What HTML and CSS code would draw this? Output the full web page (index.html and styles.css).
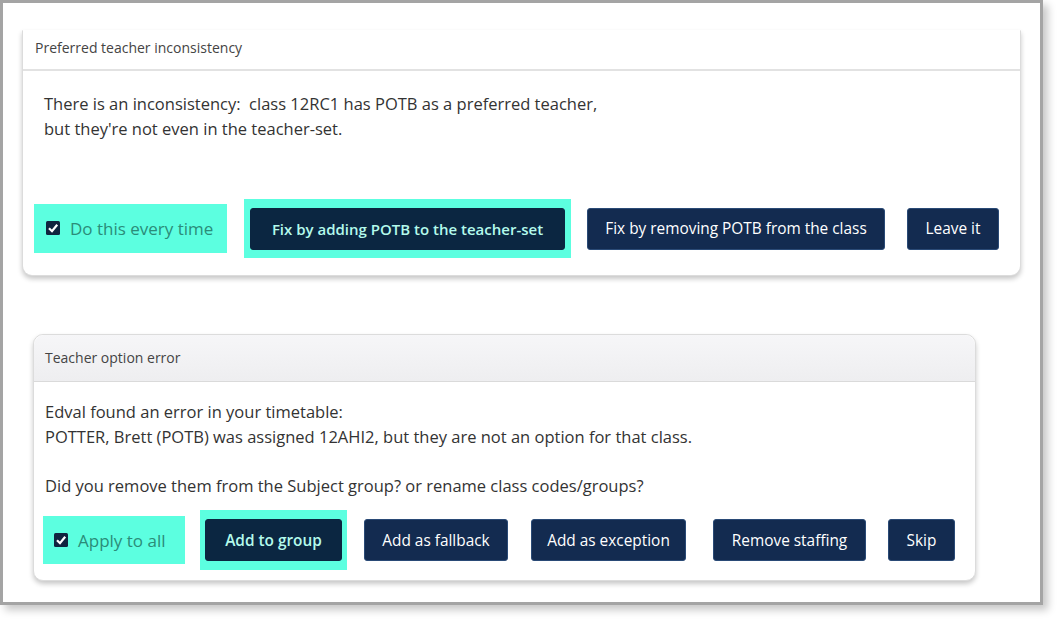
FILE: index.html
```html
<!DOCTYPE html>
<html>
<head>
<meta charset="utf-8">
<link rel="stylesheet" href="styles.css">
</head>
<body>
<div class="frame">
  <section class="card card-top">
    <div class="card-head">Preferred teacher inconsistency</div>
    <div class="card-body body-1">
      <p>There is an inconsistency:&nbsp; class 12RC1 has POTB as a preferred teacher,<br>but they're not even in the teacher-set.</p>
    </div>
    <div class="actions actions-1">
      <label class="hl check check-1"><span class="box"><svg viewBox="0 0 14 14" width="14" height="14"><rect x="0" y="0" width="14" height="14" rx="1.5" fill="#10243f"/><path d="M3 7.2 L6 10.2 L11.2 3.8" fill="none" stroke="#fff" stroke-width="2.2"/></svg></span>Do this every time</label>
      <span class="hl hl-btn hl-btn-1"><button class="btn btn-primary">Fix by adding POTB to the teacher-set</button></span>
      <button class="btn b-remove">Fix by removing POTB from the class</button>
      <button class="btn b-leave">Leave it</button>
    </div>
  </section>

  <section class="card card-second">
    <div class="card-head head-gray">Teacher option error</div>
    <div class="card-body body-2">
      <p>Edval found an error in your timetable:<br>POTTER, Brett (POTB) was assigned 12AHI2, but they are not an option for that class.</p>
      <p>Did you remove them from the Subject group? or rename class codes/groups?</p>
    </div>
    <div class="actions actions-2">
      <label class="hl check check-2"><span class="box"><svg viewBox="0 0 14 14" width="14" height="14"><rect x="0" y="0" width="14" height="14" rx="1.5" fill="#10243f"/><path d="M3 7.2 L6 10.2 L11.2 3.8" fill="none" stroke="#fff" stroke-width="2.2"/></svg></span>Apply to all</label>
      <span class="hl hl-btn hl-btn-2"><button class="btn btn-primary">Add to group</button></span>
      <button class="btn b-fallback">Add as fallback</button>
      <button class="btn b-exception">Add as exception</button>
      <button class="btn b-staff">Remove staffing</button>
      <button class="btn b-skip">Skip</button>
    </div>
  </section>
</div>
</body>
</html>
```

FILE: styles.css
```css
* { box-sizing: border-box; }
html, body { margin: 0; padding: 0; background: #ffffff; }
body {
  width: 1059px;
  height: 622px;
  overflow: hidden;
  font-family: "Segoe UI", "Open Sans", "Noto Sans", sans-serif;
  color: #333;
}
.frame {
  width: 1043px;
  height: 605px;
  border: 3px solid #a4a4a4;
  background: #fff;
  box-shadow: 5px 5px 8px rgba(0,0,0,0.22);
  padding: 27px 0 0 19px;
  overflow: hidden;
}
.card {
  background: #fff;
  border: 1px solid #dcdcdc;
  border-radius: 10px;
  box-shadow: 0 3px 5px rgba(0,0,0,0.22);
}
.card-top {
  width: 999px;
  height: 246px;
  border-top-color: transparent;
  border-radius: 0 0 10px 10px;
}
.card-head {
  height: 40px;
  padding: 7px 12px 0;
  font-size: 14px;
  color: #444;
  border-bottom: 2px solid #e2e2e2;
}
.head-gray {
  height: 47px;
  padding: 13px 11px 0;
  background: linear-gradient(#f6f6f8, #eeeef0);
  border-radius: 10px 10px 0 0;
  border-bottom: 1px solid #dadada;
}
.card-body p { margin: 0; font-size: 16.5px; line-height: 24.5px; color: #333; }
.body-1 { padding: 21px 21px 0; height: 128px; }
.body-2 { padding: 18px 11px 0; height: 128px; }
.body-2 p + p { margin-top: 24.5px; }
.actions { display: flex; align-items: center; }
.actions-1 { padding-left: 11px; }
.actions-2 { padding-left: 9px; margin-top: 0; }
.hl { background: #5cffe0; display: inline-flex; align-items: center; }
.check { font-size: 17px; color: #2b8c79; height: 49px; }
.check-1 { width: 193px; padding-left: 12px; }
.check-2 { width: 142px; padding-left: 11px; height: 48px; }
.box { width: 15px; height: 15px; margin-right: 9px; display: inline-flex; }
.hl-btn { padding: 8px 6px; height: 59px; }
.hl-btn-1 { margin-left: 17px; }
.hl-btn-2 { margin-left: 15px; height: 60px; padding: 9px 5px 9px 5px; }
.btn {
  font-family: inherit;
  font-size: 15.4px;
  height: 42px;
  border: 1px solid #2a4a76;
  border-radius: 3px;
  background: #132b50;
  color: #fff;
  padding: 0 10px;
  white-space: nowrap;
}
.btn-primary {
  background: #0b2641;
  border-color: #0b2641;
  color: #b4faec;
  font-weight: 600;
}
.hl-btn-1 .btn { width: 315px; font-size: 15px; }
.hl-btn-2 .btn { width: 137px; }
.b-remove { margin-left: 16px; width: 298px; }
.b-leave { margin-left: 22px; width: 92px; }
.b-fallback { margin-left: 17px; width: 144px; }
.b-exception { margin-left: 23px; width: 155px; }
.b-staff { margin-left: 27px; width: 153px; }
.b-skip { margin-left: 22px; width: 67px; }
.card-second {
  width: 943px;
  height: 247px;
  margin: 58px 0 0 11px;
}
```
